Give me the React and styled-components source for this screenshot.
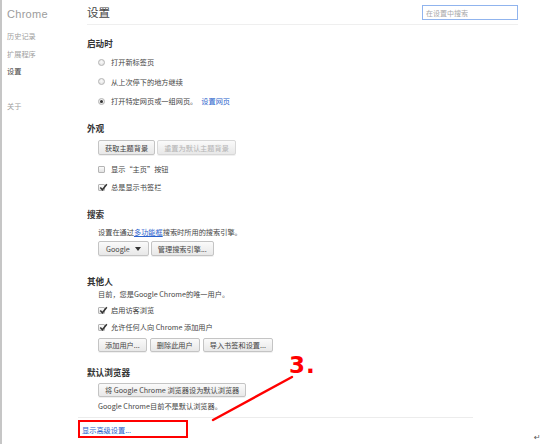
import React from 'react';
import styled, { createGlobalStyle } from 'styled-components';

const Global = createGlobalStyle`
  html, body { margin: 0; padding: 0; background: #fff; }
  body {
    width: 549px; height: 444px; overflow: hidden;
    font-family: "Noto Sans CJK SC", "Noto Sans", sans-serif;
    color: #444;
  }
  * { box-sizing: border-box; }
`;

const Page = styled.div`
  position: relative;
  display: flex;
  width: 549px;
  height: 444px;
  border-left: 2px solid #c6c6c6;
`;

const Sidebar = styled.nav`
  width: 85px;
  flex: none;
  display: flex;
  flex-direction: column;
  padding: 7px 0 0 5px;
`;

const Brand = styled.div`
  font-family: "Liberation Sans", Arial, sans-serif;
  font-size: 11px;
  line-height: 14px;
  color: #9c9c9c;
  letter-spacing: 0.3px;
  margin-bottom: 7px;
`;

const NavItem = styled.div`
  font-size: 7.2px;
  line-height: 17.5px;
  color: ${p => (p.$active ? '#444' : '#a0a0a0')};
  margin-top: ${p => (p.$gap ? '17.5px' : '0')};
`;

const Main = styled.main`
  flex: 1;
  display: flex;
  flex-direction: column;
  padding-right: 31px;
`;

const Header = styled.header`
  height: 25px;
  display: flex;
  align-items: center;
  justify-content: space-between;
  border-bottom: 1px solid #efefef;
`;

const Title = styled.h1`
  margin: 0;
  font-size: 11.5px;
  font-weight: 400;
  color: #444;
`;

const Search = styled.input`
  width: 96px;
  height: 15px;
  margin-top: 1px;
  border: 1px solid #90b4ee;
  padding: 0 3px;
  font-family: inherit;
  font-size: 7px;
  color: #444;
  outline: none;
  &::placeholder { color: #a8a8a8; }
`;

const Heading = styled.h2`
  margin: ${p => p.$top}px 0 0 0;
  font-size: 8.6px;
  line-height: 12px;
  font-weight: 600;
  color: #333;
`;

const Body = styled.div`
  padding-left: 11px;
  display: flex;
  flex-direction: column;
  margin-top: ${p => p.$top || 0}px;
`;

const Text = styled.div`
  font-size: 7.2px;
  line-height: 12px;
  color: #444;
  margin-top: ${p => p.$top || 0}px;
`;

const Link = styled.a`
  color: #2a62cc;
  text-decoration: ${p => (p.$underline ? 'underline' : 'none')};
  margin-left: ${p => p.$left || 0}px;
  cursor: pointer;
`;

const OptionRow = styled.label`
  display: flex;
  align-items: center;
  gap: 6px;
  height: ${p => p.$h}px;
  font-size: 7.2px;
  color: #444;
`;

const Radio = styled.span`
  width: 7px;
  height: 7px;
  border-radius: 50%;
  border: 1px solid #b4b4b4;
  background: radial-gradient(circle at 50% 40%, #fbfbfb, #dcdcdc);
  display: flex;
  align-items: center;
  justify-content: center;
  &::after {
    content: '';
    width: 3px;
    height: 3px;
    border-radius: 50%;
    background: ${p => (p.$checked ? '#333' : 'transparent')};
  }
`;

const Box = styled.span`
  width: 7px;
  height: 7px;
  border: 1px solid #b4b4b4;
  border-radius: 1px;
  background: linear-gradient(#fbfbfb, #e2e2e2);
  position: relative;
  display: flex;
  align-items: center;
  justify-content: center;
  overflow: visible;
`;

const ButtonRow = styled.div`
  display: flex;
  gap: ${p => p.$gap || 2}px;
  margin-top: ${p => p.$top || 0}px;
`;

const Button = styled.button`
  height: ${p => p.$h || 15}px;
  padding: 0 ${p => p.$pad || 6}px;
  font-family: inherit;
  font-size: 7.2px;
  color: ${p => (p.disabled ? '#b4b4b4' : '#444')};
  border: 1px solid ${p => (p.disabled ? '#d8d8d8' : '#c4c4c4')};
  border-radius: 2px;
  background: linear-gradient(#fafafa, #e8e8e8);
  box-shadow: 0 1px 0 rgba(0, 0, 0, 0.06);
  display: flex;
  align-items: center;
  gap: 5px;
  white-space: nowrap;
`;

const Footer = styled.div`
  margin-top: 5px;
  margin-left: -9px;
  margin-right: 45px;
  border-top: 1px solid #ececec;
  padding: 6px 0 0 4px;
  font-size: 7.2px;
  line-height: 12px;
`;

const RedBox = styled.div`
  position: absolute;
  left: 76px;
  top: 420px;
  width: 110px;
  height: 18px;
  border: 2px solid #f00;
  pointer-events: none;
`;

const Annotation = styled.svg`
  position: absolute;
  left: 0;
  top: 0;
  pointer-events: none;
`;

const StepLabel = styled.div`
  position: absolute;
  left: 287px;
  top: 352px;
  font-family: "DejaVu Sans", "Liberation Sans", sans-serif;
  font-weight: 700;
  font-size: 23px;
  line-height: 26px;
  color: #f00;
  letter-spacing: 1px;
`;

const ReturnMark = styled.div`
  position: absolute;
  left: 532px;
  top: 433px;
  font-family: "DejaVu Sans", sans-serif;
  font-size: 8px;
  color: #555;
`;

const Check = () => (
  <svg width="9" height="9" viewBox="0 0 9 9" style={{ position: 'absolute', left: 0, top: -2 }}>
    <path d="M1.3 4.6 L3.4 6.8 L7.8 1.2" fill="none" stroke="#333" strokeWidth="1.5" />
  </svg>
);

const Caret = () => (
  <svg width="6" height="4" viewBox="0 0 6 4">
    <path d="M0 0 H6 L3 4 Z" fill="#333" />
  </svg>
);

const Checkbox = ({ checked, label, h = 18 }) => (
  <OptionRow $h={h}>
    <Box>{checked && <Check />}</Box>
    {label}
  </OptionRow>
);

export default function App() {
  return (
    <>
      <Global />
      <Page>
        <Sidebar>
          <Brand>Chrome</Brand>
          <NavItem>历史记录</NavItem>
          <NavItem>扩展程序</NavItem>
          <NavItem $active>设置</NavItem>
          <NavItem $gap>关于</NavItem>
        </Sidebar>

        <Main>
          <Header>
            <Title>设置</Title>
            <Search placeholder="在设置中搜索" />
          </Header>

          <Heading $top={12}>启动时</Heading>
          <Body $top={3.5}>
            <OptionRow $h={19.5}><Radio />打开新标签页</OptionRow>
            <OptionRow $h={19.5}><Radio />从上次停下的地方继续</OptionRow>
            <OptionRow $h={19.5}>
              <Radio $checked />
              <span>打开特定网页或一组网页。<Link $left={4}>设置网页</Link></span>
            </OptionRow>
          </Body>

          <Heading $top={11}>外观</Heading>
          <Body>
            <ButtonRow $top={6}>
              <Button>获取主题背景</Button>
              <Button disabled>重置为默认主题背景</Button>
            </ButtonRow>
            <Body style={{ paddingLeft: 0 }} $top={5}>
              <Checkbox label="显示“主页”按钮" />
              <Checkbox checked label="总是显示书签栏" />
            </Body>
          </Body>

          <Heading $top={12}>搜索</Heading>
          <Body>
            <Text $top={6}>
              设置在通过<Link $underline>多功能框</Link>搜索时所用的搜索引擎。
            </Text>
            <ButtonRow $top={3}>
              <Button $pad={7}>Google <Caret /></Button>
              <Button>管理搜索引擎...</Button>
            </ButtonRow>
          </Body>

          <Heading $top={19}>其他人</Heading>
          <Body>
            <Text $top={1}>目前，您是Google Chrome的唯一用户。</Text>
            <Body style={{ paddingLeft: 0 }} $top={1.5}>
              <Checkbox checked h={17} label="启用访客浏览" />
              <Checkbox checked h={17} label="允许任何人向 Chrome 添加用户" />
            </Body>
            <ButtonRow $top={2.5} $gap={3}>
              <Button $h={14}>添加用户...</Button>
              <Button $h={14}>删除此用户</Button>
              <Button $h={14}>导入书签和设置...</Button>
            </ButtonRow>
          </Body>

          <Heading $top={14}>默认浏览器</Heading>
          <Body>
            <ButtonRow $top={5}>
              <Button $h={14}>将 Google Chrome 浏览器设为默认浏览器</Button>
            </ButtonRow>
            <Text $top={3}>Google Chrome目前不是默认浏览器。</Text>
          </Body>

          <Footer>
            <Link>显示高级设置...</Link>
          </Footer>
        </Main>

        <RedBox />
        <Annotation width="549" height="444" viewBox="0 0 549 444">
          <line x1="290" y1="377" x2="211" y2="420" stroke="#f00" strokeWidth="2.4" strokeLinecap="round" />
        </Annotation>
        <StepLabel>3.</StepLabel>
        <ReturnMark>↵</ReturnMark>
      </Page>
    </>
  );
}
